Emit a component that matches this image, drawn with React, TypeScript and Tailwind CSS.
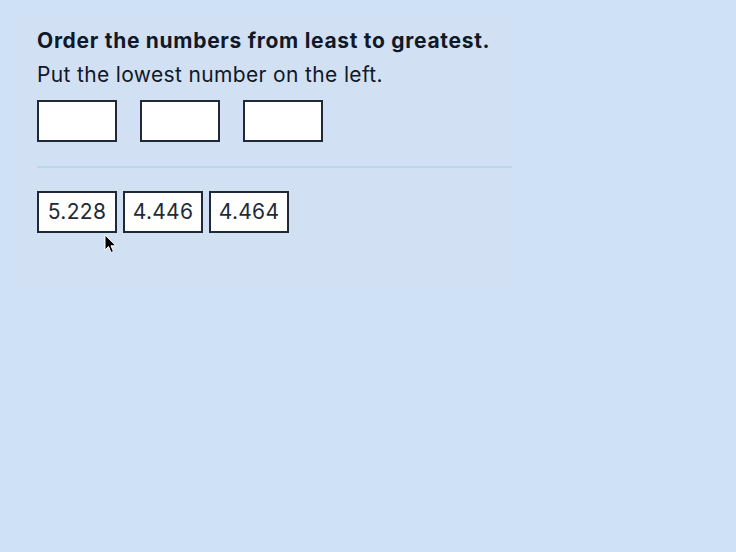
const numbers = ['5.228', '4.446', '4.464'];

function Cursor() {
  return (
    <svg
      className="absolute left-[104px] top-[234px]"
      width="13"
      height="20"
      viewBox="0 0 13 20"
    >
      <path
        d="M1 1 L1 16 L4.5 12.5 L7 18.5 L9.5 17.5 L7 11.8 L12 11.8 Z"
        fill="#000"
        stroke="#fff"
        strokeWidth="1"
        strokeLinejoin="round"
      />
    </svg>
  );
}

export default function App() {
  return (
    <div
      className="relative w-[736px] h-[552px] bg-[#cee1f6] pt-4 pl-4"
      style={{ fontFamily: 'Inter, "Noto Sans", sans-serif' }}
    >
      <div className="w-[496px] h-[272px] bg-[#d1e1f3] pt-[12px]">
        <div className="pl-[21px] text-[#111827]">
          <h1 className="text-[21px] leading-[26px] font-bold tracking-[0.7px]">
            Order the numbers from least to greatest.
          </h1>
          <p className="mt-[8px] text-[21px] leading-[26px] tracking-[0.35px]">
            Put the lowest number on the left.
          </p>

          {/* answer slots */}
          <div className="mt-[12px] flex gap-[23px]">
            {numbers.map((n) => (
              <div
                key={n}
                className="w-[80px] h-[42px] bg-white border-2 border-[#1f2937]"
              />
            ))}
          </div>
        </div>

        <div className="ml-[21px] mt-[24px] h-[2px] bg-[#bcd8ec]" />

        {/* draggable tiles */}
        <div className="pl-[21px] mt-[23px] flex gap-[6px]">
          {numbers.map((n) => (
            <div
              key={n}
              className="w-[80px] h-[42px] bg-white border-2 border-[#1f2937] flex items-center justify-center text-[21px] tracking-[0.3px] text-[#1f2937]"
            >
              {n}
            </div>
          ))}
        </div>
      </div>
      <Cursor />
    </div>
  );
}
